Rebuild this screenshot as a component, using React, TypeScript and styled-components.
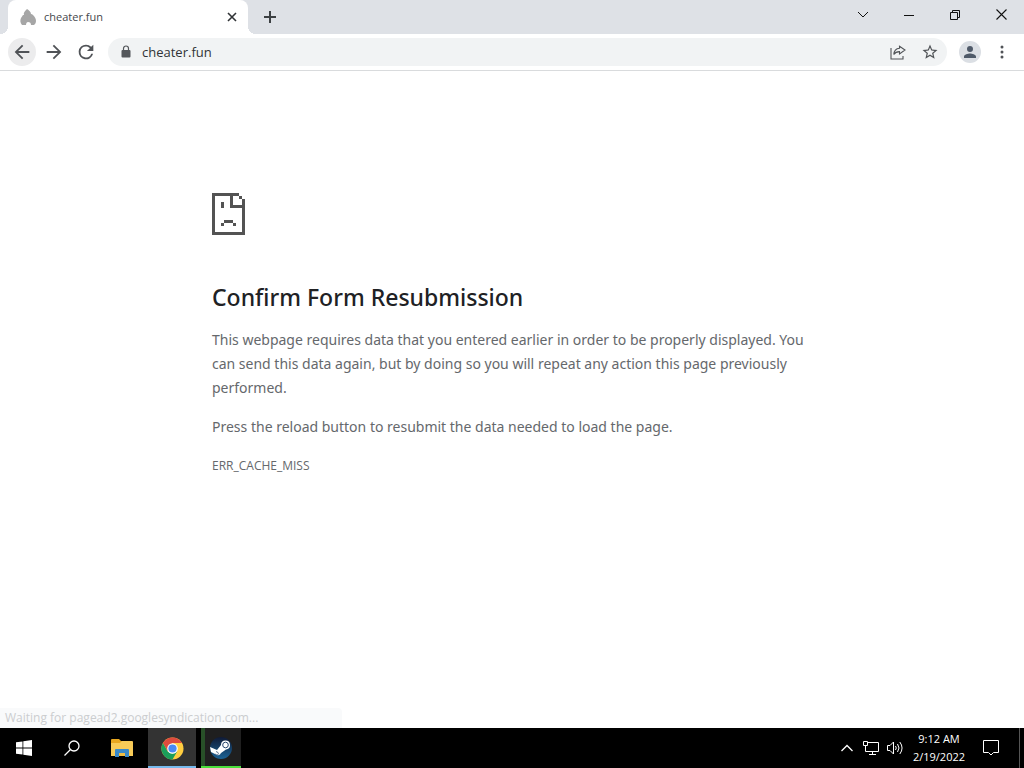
import React from "react";
import styled, { createGlobalStyle, css } from "styled-components";

const ui = `"Noto Sans", "Open Sans", sans-serif`;
const compact = `"Open Sans", "Noto Sans", sans-serif`;

const GlobalStyle = createGlobalStyle`
  *, *::before, *::after { box-sizing: border-box; }
  body { margin: 0; background: #fff; font-family: ${ui}; }
  button, input { font: inherit; color: inherit; }
  h1, p { margin: 0; }
`;

const Screen = styled.div`
  min-height: 100vh;
  display: flex;
  flex-direction: column;
`;

const TabStrip = styled.header`
  display: flex;
  height: 34px;
  padding-left: 8px;
  background: #dee1e6;
`;

const Tab = styled.div`
  position: relative;
  display: flex;
  align-items: center;
  gap: 8px;
  width: 240px;
  padding: 0 8px 0 12px;
  background: #fff;
  border-radius: 8px 8px 0 0;
  &::before, &::after {
    content: "";
    position: absolute;
    bottom: 0;
    width: 8px;
    height: 8px;
  }
  &::before { right: 100%; background: radial-gradient(circle at 0 0, #dee1e6 8px, #fff 8px); }
  &::after { left: 100%; background: radial-gradient(circle at 100% 0, #dee1e6 8px, #fff 8px); }
`;

const TabTitle = styled.span`
  flex: 1;
  font-size: 11px;
  line-height: 16px;
  color: #45484c;
  font-family: ${compact};
`;

const IconButton = styled.button<{ $size?: number; $fill?: string }>`
  display: flex;
  align-items: center;
  justify-content: center;
  flex: none;
  width: ${(p) => p.$size ?? 28}px;
  height: ${(p) => p.$size ?? 28}px;
  padding: 0;
  border: 0;
  border-radius: 50%;
  background: ${(p) => p.$fill ?? "transparent"};
  color: #505357;
  svg { display: block; }
`;

const NewTab = styled(IconButton)`
  margin: 3px 0 0 8px;
  color: #3c4043;
`;

const WindowControls = styled.div`
  display: flex;
  height: 29px;
  margin-left: auto;
`;

const WindowButton = styled.button`
  display: flex;
  align-items: center;
  justify-content: center;
  width: 46px;
  padding: 0;
  border: 0;
  background: transparent;
  color: #111;
`;

const Toolbar = styled.nav`
  display: flex;
  align-items: center;
  gap: 4px;
  height: 37px;
  padding: 0 12px 0 8px;
  border-bottom: 1px solid #d9dbdd;
`;

const Omnibox = styled.div`
  flex: 1;
  display: flex;
  align-items: center;
  height: 28px;
  margin: 0 4px;
  padding: 0 3px 0 13px;
  border-radius: 14px;
  background: #f1f3f4;
  color: #54575b;
`;

const Address = styled.input`
  flex: 1;
  min-width: 0;
  margin-left: 11px;
  padding: 0;
  border: 0;
  outline: 0;
  background: transparent;
  color: #303336;
  font-family: ${compact};
  font-size: 13px;
  line-height: 20px;
`;

const Profile = styled(IconButton)`
  margin: 0 7px 0 4px;
  color: #4f5a69;
`;

const OmniboxActions = styled.div`
  display: flex;
  gap: 4px;
`;

const Page = styled.main`
  position: relative;
  flex: 1;
  padding: 122px 24px 48px;
`;

const Message = styled.section`
  display: flex;
  flex-direction: column;
  max-width: 600px;
  margin: 0 auto;
  color: #65686c;
  font-size: 14px;
  line-height: 24px;
`;

const Heading = styled.h1`
  margin: 48px 0 16px;
  color: #202124;
  font-size: 23px;
  font-weight: 500;
  line-height: 29px;
`;

const Paragraph = styled.p`
  margin-bottom: 15px;
`;

const ErrorCode = styled.p`
  font-size: 12px;
  font-family: ${compact};
`;

const StatusBubble = styled.div`
  position: absolute;
  left: 0;
  bottom: 0;
  width: 342px;
  max-width: 100%;
  padding: 2px 5px;
  border-radius: 0 4px 0 0;
  background: #f9fafb;
  color: #cbcdcf;
  font-family: ${compact};
  font-size: 12px;
  line-height: 16px;
`;

const Taskbar = styled.footer`
  display: flex;
  height: 40px;
  background: #000;
  color: #fff;
`;

const TaskButton = styled.button<{ $state?: "active" | "running"; $wide?: boolean }>`
  display: flex;
  align-items: center;
  justify-content: center;
  width: ${(p) => (p.$wide ? 52 : 48)}px;
  padding: 0;
  border: 0;
  background: transparent;
  color: #fff;
  ${(p) => p.$state === "active" && css`
    background: #333;
    border-bottom: 2px solid #76b9ed;
    padding-top: 2px;
  `}
  ${(p) => p.$state === "running" && css`
    width: 40px;
    margin-left: 5px;
    background: linear-gradient(90deg, #285028 4px, #1f1f1f 4px);
    border-bottom: 2px solid #4be03c;
    padding-top: 2px;
  `}
`;

const Tray = styled.div`
  display: flex;
  margin-left: auto;
  border-right: 1px solid #000;
`;

const TrayButton = styled.button<{ $width: number }>`
  display: flex;
  align-items: center;
  justify-content: center;
  width: ${(p) => p.$width}px;
  padding: 0;
  border: 0;
  background: transparent;
  color: #fff;
`;

const Clock = styled.time`
  display: flex;
  flex-direction: column;
  justify-content: center;
  width: 64px;
  text-align: center;
  font-family: ${compact};
  font-size: 11px;
  line-height: 18px;
  white-space: nowrap;
`;

const ShowDesktop = styled.button`
  width: 4px;
  margin-left: 8px;
  padding: 0;
  border: 0;
  border-left: 1px solid #555;
  background: #000;
`;

const Flame = () => (
  <svg width="16" height="18" viewBox="0 0 16 18" fill="#a6a6a6" aria-hidden="true">
    <path d="M7 1c2 1 4 3 4 5q1 0 2 1c2 2 3 4 3 6 0 2-1 3-2 4h-3c0-2-1-3-3-3-1 0-2 1-2 3H2c-2-2-2-5-1-7l2-3 1 0c-1-2 1-4 3-6z" />
  </svg>
);

const Glyph = ({ d, size = 22 }: { d: string; size?: number }) => (
  <svg width={size} height={size} viewBox="0 0 24 24" fill="currentColor" aria-hidden="true">
    <path d={d} />
  </svg>
);

const SadPage = () => (
  <svg width="33" height="42" viewBox="0 0 11 14" fill="#535353" shapeRendering="crispEdges" role="img" aria-label="Sad page">
    <path d="M0 0h9v1H7v3h3v-2h1v12H0zM1 1v12h9V5H6V1zM9 1h1v1H9zM3 3h1v2H3zM4 9h3v1H4zM3 10h1v1H3zM7 10h1v1H7z" fillRule="evenodd" />
  </svg>
);

const Folder = () => (
  <svg width="22" height="18" viewBox="0 0 22 18" aria-hidden="true">
    <path d="M0 1q0-1 1-1h7l2 2h11v4H0z" fill="#e8a720" />
    <path d="M0 4h9l2-2h10q1 0 1 1v14H0z" fill="#f8cb58" />
    <path d="M4 18v-7q0-1 1-1h12q1 0 1 1v7h-4v-4H8v4z" fill="#3989c9" />
    <path d="M8 14h6v3H8z" fill="#eebd45" />
  </svg>
);

const Chrome = () => (
  <svg width="23" height="23" viewBox="0 0 24 24" aria-hidden="true">
    <circle cx="12" cy="12" r="11.5" fill="#ffcd40" />
    <path d="M2 6.300A11.500 11.500 0 0 1 22 6.300H12L7 14.800z" fill="#dd4b3e" />
    <path d="M2 6.200A11.500 11.500 0 0 0 12 23.500L17 14.800 12 17.500 7 15z" fill="#1b9e5b" />
    <circle cx="12" cy="12" r="5.500" fill="#fff" />
    <circle cx="12" cy="12" r="4.300" fill="#4889f4" />
  </svg>
);

const Steam = () => (
  <svg width="24" height="24" viewBox="0 0 24 24" aria-hidden="true">
    <defs>
      <linearGradient id="steam" x2="0" y2="1">
        <stop stopColor="#101a35" />
        <stop offset="1" stopColor="#1b6396" />
      </linearGradient>
    </defs>
    <circle cx="12" cy="12" r="11" fill="url(#steam)" />
    <path d="M1 11l7 3 4-5a4.500 4.500 0 1 1 5 4.500l-5 3.500a3.500 3.500 0 0 1-6 1l-4-2z" fill="#fff" />
    <circle cx="16.500" cy="9" r="2.800" fill="none" stroke="#26456b" />
    <path d="M7 15.500l2 1a1.500 1.500 0 0 1-1 2.500l-2-1" fill="none" stroke="#26456b" strokeWidth=".7" />
  </svg>
);

export default function App() {
  return (
    <Screen>
      <GlobalStyle />
      <TabStrip>
        <Tab>
          <Flame />
          <TabTitle>cheater.fun</TabTitle>
          <IconButton $size={16} aria-label="Close tab">
            <svg width="10" height="10" viewBox="0 0 10 10" stroke="#303336" strokeWidth="1.600" aria-hidden="true"><path d="M1 1l8 8M9 1L1 9" /></svg>
          </IconButton>
        </Tab>
        <NewTab aria-label="New tab">
          <svg width="12" height="12" viewBox="0 0 12 12" stroke="currentColor" strokeWidth="2" aria-hidden="true"><path d="M6 0v12M0 6h12" /></svg>
        </NewTab>
        <WindowControls>
          <WindowButton aria-label="Search tabs">
            <svg width="12" height="8" viewBox="0 0 12 8" fill="none" stroke="currentColor" aria-hidden="true"><path d="M1 1l5 5 5-5" /></svg>
          </WindowButton>
          <WindowButton aria-label="Minimize">
            <svg width="10" height="10" viewBox="0 0 10 10" stroke="currentColor" aria-hidden="true"><path d="M0 5.500h10" /></svg>
          </WindowButton>
          <WindowButton aria-label="Restore">
            <svg width="10" height="10" viewBox="0 0 10 10" fill="none" stroke="currentColor" aria-hidden="true"><path d="M.5 2.500h7v7h-7zM2.500 2.500v-2h7v7h-2" /></svg>
          </WindowButton>
          <WindowButton aria-label="Close">
            <svg width="11" height="11" viewBox="0 0 11 11" stroke="currentColor" strokeWidth="1.100" aria-hidden="true"><path d="M.5.5l10 10M10.500.5l-10 10" /></svg>
          </WindowButton>
        </WindowControls>
      </TabStrip>

      <Toolbar>
        <IconButton $fill="#ececed" aria-label="Back"><Glyph d="M20 11H7.830l5.590-5.590L12 4l-8 8 8 8 1.410-1.410L7.830 13H20v-2z" /></IconButton>
        <IconButton aria-label="Forward"><Glyph d="M12 4l-1.410 1.410L16.170 11H4v2h12.170l-5.580 5.590L12 20l8-8z" /></IconButton>
        <IconButton aria-label="Reload"><Glyph d="M17.650 6.350A7.960 7.960 0 0 0 12 4a8 8 0 1 0 7.730 10h-2.080A6 6 0 1 1 12 6c1.660 0 3.140.69 4.220 1.780L13 11h7V4z" /></IconButton>
        <Omnibox>
          <svg width="10" height="14" viewBox="0 0 10 14" aria-hidden="true">
            <rect x=".5" y="5" width="9" height="7.500" rx="1" fill="currentColor" />
            <path d="M2.500 5V3.500a2.500 2.500 0 0 1 5 0V5" fill="none" stroke="currentColor" strokeWidth="1.200" />
          </svg>
          <Address aria-label="Address" defaultValue="cheater.fun" />
          <OmniboxActions>
            <IconButton aria-label="Share">
              <svg width="16" height="16" viewBox="0 0 16 16" fill="none" stroke="currentColor" strokeWidth="1.100" aria-hidden="true">
                <path d="M1 4v11h12v-3M9.500 2.200L15 6l-5.500 4V7.600C7 7.600 5 8.500 3.800 10.500 4 7 6 4.500 9.500 4.200z" />
              </svg>
            </IconButton>
            <IconButton aria-label="Bookmark this page"><Glyph size={18} d="M22 9.240l-7.190-.62L12 2 9.190 8.630 2 9.240l5.460 4.730L5.820 21 12 17.270 18.180 21l-1.630-7.030zM12 15.400l-3.760 2.270 1-4.280-3.320-2.880 4.380-.38L12 6.100l1.710 4.040 4.380.38-3.320 2.880 1 4.280z" /></IconButton>
          </OmniboxActions>
        </Omnibox>
        <Profile $size={22} $fill="#dbdfe4" aria-label="Profile"><Glyph size={18} d="M12 12a4 4 0 1 0 0-8 4 4 0 0 0 0 8zm0 2c-2.670 0-8 1.340-8 4v2h16v-2c0-2.660-5.330-4-8-4z" /></Profile>
        <IconButton $size={20} aria-label="Menu">
          <svg width="4" height="14" viewBox="0 0 4 14" fill="currentColor" aria-hidden="true"><circle cx="2" cy="2" r="1.500" /><circle cx="2" cy="7" r="1.500" /><circle cx="2" cy="12" r="1.500" /></svg>
        </IconButton>
      </Toolbar>

      <Page>
        <Message>
          <SadPage />
          <Heading>Confirm Form Resubmission</Heading>
          <Paragraph>This webpage requires data that you entered earlier in order to be properly displayed. You can send this data again, but by doing so you will repeat any action this page previously performed.</Paragraph>
          <Paragraph>Press the reload button to resubmit the data needed to load the page.</Paragraph>
          <ErrorCode>ERR_CACHE_MISS</ErrorCode>
        </Message>
        <StatusBubble role="status">Waiting for pagead2.googlesyndication.com...</StatusBubble>
      </Page>

      <Taskbar>
        <TaskButton aria-label="Start">
          <svg width="16" height="16" viewBox="0 0 16 16" fill="#fff" aria-hidden="true"><path d="M0 2.300l6.500-.9v6.200H0zM7.300 1.300L16 0v7.600H7.300zM0 8.400h6.500v6.200L0 13.700zM7.300 8.400H16V16l-8.700-1.300z" /></svg>
        </TaskButton>
        <TaskButton aria-label="Search">
          <svg width="16" height="16" viewBox="0 0 16 16" fill="none" stroke="#fff" strokeWidth="1.300" aria-hidden="true"><circle cx="10" cy="6" r="5" /><path d="M6.500 9.500L.5 15.500" /></svg>
        </TaskButton>
        <TaskButton $wide aria-label="File Explorer"><Folder /></TaskButton>
        <TaskButton $state="active" aria-label="Google Chrome"><Chrome /></TaskButton>
        <TaskButton $state="running" aria-label="Steam"><Steam /></TaskButton>
        <Tray>
          <TrayButton $width={24} aria-label="Show hidden icons">
            <svg width="12" height="8" viewBox="0 0 12 8" fill="none" stroke="currentColor" strokeWidth="1.300" aria-hidden="true"><path d="M.5 7L6 1.500 11.500 7" /></svg>
          </TrayButton>
          <TrayButton $width={24} aria-label="Network">
            <svg width="16" height="14" viewBox="0 0 16 14" fill="none" stroke="currentColor" aria-hidden="true"><path d="M4.500 1.500h11v9h-13v-6M6 13.500h7M9.500 10.500v3M.5.500h4v4h-4z" /></svg>
          </TrayButton>
          <TrayButton $width={24} aria-label="Volume">
            <svg width="17" height="14" viewBox="0 0 17 14" fill="none" stroke="currentColor" aria-hidden="true"><path d="M.5 4.500h2.500l3.500-3.500v12L3 9.500H.5zM8.500 5q1.500 2 0 4M10.500 3q3 4 0 8M12.800 1q4.500 6 0 12" /></svg>
          </TrayButton>
          <Clock dateTime="2022-02-19T09:12"><span>9:12 AM</span><span>2/19/2022</span></Clock>
          <TrayButton $width={40} aria-label="Notifications">
            <svg width="16" height="16" viewBox="0 0 16 16" fill="none" stroke="currentColor" aria-hidden="true"><path d="M.5.500h15v12h-5L8 15l-2.500-2.500h-5z" /></svg>
          </TrayButton>
          <ShowDesktop aria-label="Show desktop" />
        </Tray>
      </Taskbar>
    </Screen>
  );
}
